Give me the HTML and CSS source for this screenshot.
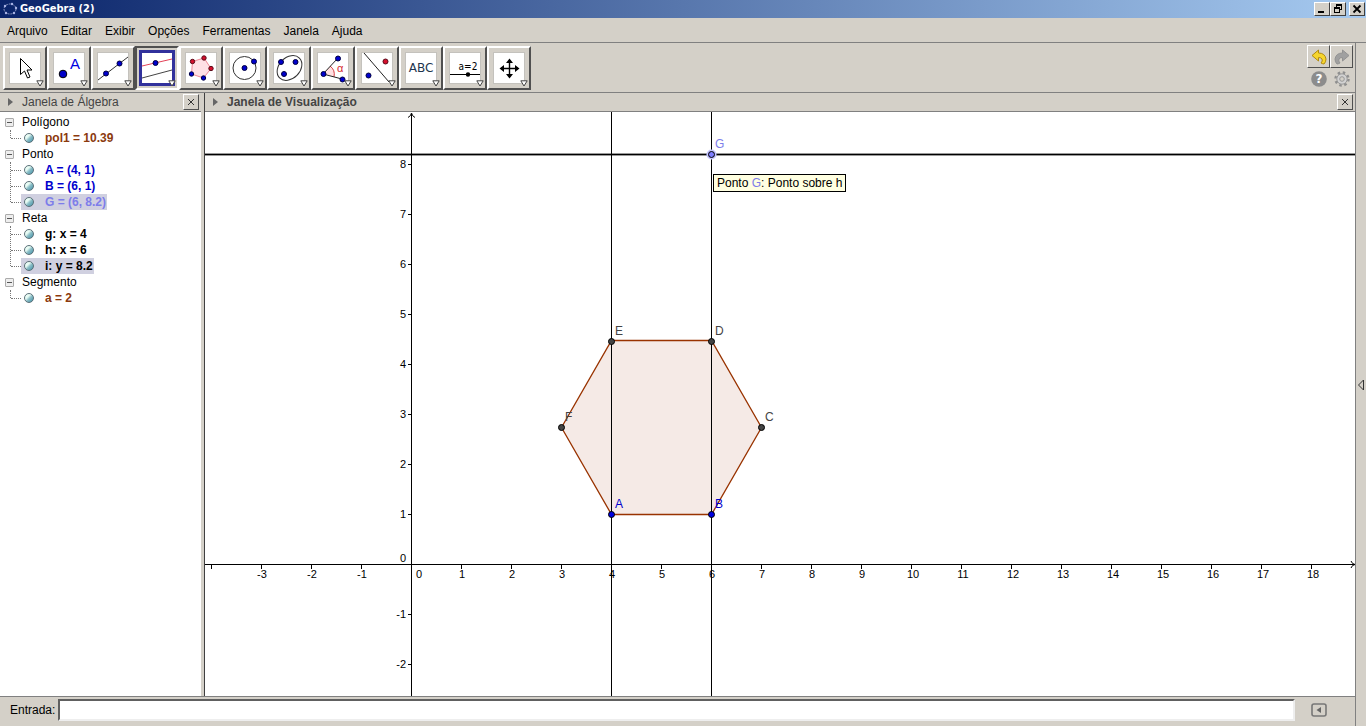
FILE: index.html
```html
<!DOCTYPE html>
<html lang="pt">
<head>
<meta charset="utf-8">
<title>GeoGebra (2)</title>
<link rel="stylesheet" href="styles.css">
</head>
<body>
<header class="titlebar">
  <svg class="logo" width="16" height="16" viewBox="0 0 16 16"><ellipse cx="8" cy="8" rx="6" ry="5" fill="none" stroke="#8f9bc4" stroke-dasharray="2 1"/><g fill="#a9b4e6"><circle cx="3" cy="5" r="1.2"/><circle cx="10" cy="3" r="1.2"/><circle cx="14" cy="7" r="1.2"/><circle cx="4" cy="12" r="1.2"/><circle cx="12" cy="12" r="1.2"/></g></svg>
  <h1 class="title">GeoGebra (2)</h1>
  <div class="winbuttons">
    <button class="winbtn" aria-label="Minimizar"><svg width="12" height="10" viewBox="0 0 12 10"><path d="M2 7h6v2H2z"/></svg></button>
    <button class="winbtn" aria-label="Restaurar"><svg width="12" height="10" viewBox="0 0 12 10" shape-rendering="crispEdges"><path d="M4 0h6v6H8V5h1V2H5v1H4zM2 3h6v6H2zM3 5v3h4V5z" fill-rule="evenodd"/></svg></button>
    <button class="winbtn winclose" aria-label="Fechar"><svg width="12" height="10" viewBox="0 0 12 10"><path d="M2.500 1.500l7 7M9.500 1.500l-7 7" stroke="#000" stroke-width="1.800"/></svg></button>
  </div>
</header>
<nav class="menubar">
  <button class="menu">Arquivo</button><button class="menu">Editar</button><button class="menu">Exibir</button><button class="menu">Opções</button><button class="menu">Ferramentas</button><button class="menu">Janela</button><button class="menu">Ajuda</button>
</nav>
<div class="workspace">
  <main class="main">
    <div class="toolbar">
      <div class="tools">
        <button class="tool" aria-label="Mover"><svg class="icon" viewBox="1 1 30 30"><path d="M11.500 6.500v16l4-3.500 3 7 2.500-1-3-7h5z" fill="#fff" stroke="#000"/></svg><svg class="drop" viewBox="0 0 8 7"><path d="M.8.8h6.400L4 6z"/></svg></button>
        <button class="tool" aria-label="Ponto"><svg class="icon" viewBox="1 1 30 30"><circle cx="10" cy="22" r="3.800" fill="#0000c8" stroke="#000"/><text class="glyph-a" x="17" y="17">A</text></svg><svg class="drop" viewBox="0 0 8 7"><path d="M.8.8h6.400L4 6z"/></svg></button>
        <button class="tool" aria-label="Reta"><svg class="icon" viewBox="1 1 30 30"><path d="M1 28L31 5" stroke="#333"/><g class="bluepoint"><circle cx="9" cy="21.500" r="2.500"/><circle cx="22.500" cy="11.500" r="2.500"/></g></svg><svg class="drop" viewBox="0 0 8 7"><path d="M.8.8h6.400L4 6z"/></svg></button>
        <button class="tool active" aria-label="Reta Paralela"><svg class="icon" viewBox="1 1 30 30"><path d="M1 14L31 7" stroke="#e24258"/><path d="M1 26L31 18" stroke="#444"/><circle class="bluepoint" cx="14.500" cy="11" r="2.500"/></svg><svg class="drop" viewBox="0 0 8 7"><path d="M.8.8h6.400L4 6z"/></svg></button>
        <button class="tool" aria-label="Polígono"><svg class="icon" viewBox="1 1 30 30"><path d="M7.500 9.500L19 6l7 10.500L18.500 26 6.500 22z" fill="#ffe0e5" stroke="#f08896"/><g class="redpoint"><circle cx="7.500" cy="9.500" r="2.200"/><circle cx="19" cy="6" r="2.200"/><circle cx="26" cy="16.500" r="2.200"/></g><g class="bluepoint"><circle cx="18.500" cy="26" r="2.200"/><circle cx="6.500" cy="22" r="2.200"/></g></svg><svg class="drop" viewBox="0 0 8 7"><path d="M.8.8h6.400L4 6z"/></svg></button>
        <button class="tool" aria-label="Círculo"><svg class="icon" viewBox="1 1 30 30"><circle cx="15.500" cy="16" r="11.500" fill="none" stroke="#333"/><g class="bluepoint"><circle cx="15.500" cy="16" r="2.500"/><circle cx="25" cy="9.500" r="2.500"/></g></svg><svg class="drop" viewBox="0 0 8 7"><path d="M.8.8h6.400L4 6z"/></svg></button>
        <button class="tool" aria-label="Elipse"><svg class="icon" viewBox="1 1 30 30"><ellipse cx="16.500" cy="16" rx="14" ry="10.500" transform="rotate(-45 16.500 16)" fill="none" stroke="#333"/><g class="bluepoint"><circle cx="8" cy="10" r="2.500"/><circle cx="22.500" cy="10" r="2.500"/><circle cx="11" cy="22" r="2.500"/></g></svg><svg class="drop" viewBox="0 0 8 7"><path d="M.8.8h6.400L4 6z"/></svg></button>
        <button class="tool" aria-label="Ângulo"><svg class="icon" viewBox="1 1 30 30"><path d="M6 22L13 14.500Q18 18 17 24.500z" fill="#ffdfe1"/><path d="M13 14Q18.500 18 17 25" fill="none" stroke="#d63a40"/><path d="M21 6L6 22l19 5" fill="none" stroke="#222"/><g class="bluepoint"><circle cx="21" cy="6.500" r="2.500"/><circle cx="6.500" cy="22" r="2.500"/><circle cx="25.500" cy="27.500" r="2.500"/></g><text class="glyph-alpha" x="20" y="20">α</text></svg><svg class="drop" viewBox="0 0 8 7"><path d="M.8.8h6.400L4 6z"/></svg></button>
        <button class="tool" aria-label="Reflexão"><svg class="icon" viewBox="1 1 30 30"><path d="M3 1L28 30" stroke="#222"/><circle class="redpoint" cx="24.500" cy="9.500" r="2.500"/><circle class="bluepoint" cx="7.500" cy="23.500" r="2.500"/></svg><svg class="drop" viewBox="0 0 8 7"><path d="M.8.8h6.400L4 6z"/></svg></button>
        <button class="tool" aria-label="Texto"><svg class="icon" viewBox="1 1 30 30"><text class="glyph-abc" x="16" y="20">ABC</text></svg><svg class="drop" viewBox="0 0 8 7"><path d="M.8.8h6.400L4 6z"/></svg></button>
        <button class="tool" aria-label="Controle Deslizante"><svg class="icon" viewBox="1 1 30 30"><text class="glyph-slider" x="19" y="18">a=2</text><path d="M1 22.500h30" stroke="#000"/><circle cx="19" cy="22.500" r="2.200"/></svg><svg class="drop" viewBox="0 0 8 7"><path d="M.8.8h6.400L4 6z"/></svg></button>
        <button class="tool" aria-label="Mover Janela"><svg class="icon" viewBox="1 1 30 30"><path d="M8 16.500h17M16.500 8v17" stroke="#000" stroke-width="1.400"/><path d="M16.500 6.500l3.500 4.500h-7zM16.500 26.500l3.500-4.500h-7zM6.500 16.500L11 13v7zM26.500 16.500L22 13v7z"/></svg><svg class="drop" viewBox="0 0 8 7"><path d="M.8.8h6.400L4 6z"/></svg></button>
      </div>
      <div class="actions">
        <button class="action raised" aria-label="Desfazer"><svg width="16" height="16" viewBox="0 0 16 16"><path d="M1 6.500L7.500 1v3Q14 4 15 10q0 3-2 5-1 0-3-1 2-2 1-4-1-1.500-3.500-1.500V12z" fill="#f6d52d" stroke="#b18a0d"/></svg></button>
        <button class="action raised" aria-label="Refazer"><svg width="16" height="16" viewBox="0 0 16 16"><path d="M15 6.500L8.500 1v3Q2 4 1 10q0 3 2 5 1 0 3-1-2-2-1-4 1-1.500 3.500-1.500V12z" fill="#a0a0a0" stroke="#929292"/></svg></button>
        <button class="action" aria-label="Ajuda"><svg width="16" height="16" viewBox="0 0 16 16"><circle cx="8" cy="8" r="7.800" fill="#8c8c8c"/><text class="glyph-help" x="8" y="12">?</text></svg></button>
        <button class="action" aria-label="Preferências"><svg width="16" height="16" viewBox="0 0 16 16"><circle cx="8" cy="8" r="6.500" fill="none" stroke="#8f8f8f" stroke-width="2.400" stroke-dasharray="2.500 2.600"/><circle cx="8" cy="8" r="5.200" fill="#d2d2d2" stroke="#989898"/><circle cx="8" cy="8" r="2.300" fill="#d4d0c8" stroke="#989898"/></svg></button>
      </div>
    </div>
    <div class="panels">
      <section class="algebra">
        <div class="panelhead"><svg width="5" height="8" viewBox="0 0 5 8"><path d="M0 0l5 4-5 4z" fill="#666"/></svg><h2 class="paneltitle">Janela de Álgebra</h2><button class="close" aria-label="Fechar Álgebra"><svg width="8" height="8" viewBox="0 0 8 8"><path d="M1 1l6 6M7 1L1 7" stroke="#333"/></svg></button></div>
        <ul class="tree">
          <li><span class="group">Polígono</span>
            <ul class="items"><li class="item brown"><span class="value">pol1 = 10.39</span></li></ul></li>
          <li><span class="group">Ponto</span>
            <ul class="items"><li class="item blue"><span class="value">A = (4, 1)</span></li><li class="item blue"><span class="value">B = (6, 1)</span></li><li class="item violet"><span class="value selected">G = (6, 8.2)</span></li></ul></li>
          <li><span class="group">Reta</span>
            <ul class="items"><li class="item"><span class="value">g: x = 4</span></li><li class="item"><span class="value">h: x = 6</span></li><li class="item"><span class="value selected">i: y = 8.2</span></li></ul></li>
          <li><span class="group">Segmento</span>
            <ul class="items"><li class="item brown"><span class="value">a = 2</span></li></ul></li>
        </ul>
      </section>
      <section class="graphics">
        <div class="panelhead"><svg width="5" height="8" viewBox="0 0 5 8"><path d="M0 0l5 4-5 4z" fill="#666"/></svg><h2 class="paneltitle strong">Janela de Visualização</h2><button class="close" aria-label="Fechar Visualização"><svg width="8" height="8" viewBox="0 0 8 8"><path d="M1 1l6 6M7 1L1 7" stroke="#333"/></svg></button></div>
        <div class="canvas">
          <svg class="plot">
            <path d="M406.500 402.500h100l50-87-50-87h-100l-50 87z" fill="#f5eae6" stroke="#993300" stroke-width="1.300"/>
            <rect x="0" y="452" width="100%" height="1"/>
            <rect x="206" y="2" width="1" height="100%"/>
            <path d="M203 5.500Q206 4 206.500 1q.5 3 3.500 4.500" fill="none" stroke="#000"/>
            <svg class="arrow" x="100%" y="452"><path d="M-4-3q1 3 4 3.500-3 .5-4 3.500" fill="none" stroke="#000"/></svg>
            <path d="M6 452h1v5h-1zM56 452h1v5h-1zM106 452h1v5h-1zM156 452h1v5h-1zM256 452h1v5h-1zM306 452h1v5h-1zM356 452h1v5h-1zM406 452h1v5h-1zM456 452h1v5h-1zM506 452h1v5h-1zM556 452h1v5h-1zM606 452h1v5h-1zM656 452h1v5h-1zM706 452h1v5h-1zM756 452h1v5h-1zM806 452h1v5h-1zM856 452h1v5h-1zM906 452h1v5h-1zM956 452h1v5h-1zM1006 452h1v5h-1zM1056 452h1v5h-1zM1106 452h1v5h-1z"/>
            <path d="M203 52h3v1h-3zM203 102h3v1h-3zM203 152h3v1h-3zM203 202h3v1h-3zM203 252h3v1h-3zM203 302h3v1h-3zM203 352h3v1h-3zM203 402h3v1h-3zM203 502h3v1h-3zM203 552h3v1h-3z"/>
            <g class="tick xtick">
              <text x="57" y="466">-3</text><text x="107" y="466">-2</text><text x="157" y="466">-1</text><text x="214" y="466">0</text><text x="257" y="466">1</text><text x="307" y="466">2</text><text x="357" y="466">3</text><text x="407" y="466">4</text><text x="457" y="466">5</text><text x="507" y="466">6</text><text x="557" y="466">7</text><text x="607" y="466">8</text><text x="657" y="466">9</text><text x="708" y="466">10</text><text x="758" y="466">11</text><text x="808" y="466">12</text><text x="858" y="466">13</text><text x="908" y="466">14</text><text x="958" y="466">15</text><text x="1008" y="466">16</text><text x="1058" y="466">17</text><text x="1108" y="466">18</text>
            </g>
            <g class="tick ytick">
              <text x="201" y="56">8</text><text x="201" y="106">7</text><text x="201" y="156">6</text><text x="201" y="206">5</text><text x="201" y="256">4</text><text x="201" y="306">3</text><text x="201" y="356">2</text><text x="201" y="406">1</text><text x="201" y="450">0</text><text x="201" y="506">-1</text><text x="201" y="556">-2</text>
            </g>
            <rect x="0" y="41" width="100%" height="3" fill="#999"/>
            <rect x="0" y="42" width="100%" height="1"/>
            <rect x="206" y="2" width="1" height="60"/>
            <rect x="406" y="0" width="1" height="100%"/>
            <rect x="506" y="0" width="1" height="100%"/>
            <circle cx="506.500" cy="42.500" r="5" fill="#c5c5ff"/>
            <g stroke="#000">
              <circle cx="506.500" cy="42.500" r="3" fill="#7d7dff"/>
              <circle cx="406.500" cy="402.500" r="3" fill="#0000e0"/><circle cx="506.500" cy="402.500" r="3" fill="#0000e0"/>
              <circle cx="556.500" cy="315.500" r="3" fill="#444"/><circle cx="506.500" cy="229.500" r="3" fill="#444"/><circle cx="406.500" cy="229.500" r="3" fill="#444"/><circle cx="356.500" cy="315.500" r="3" fill="#444"/>
            </g>
            <g class="label">
              <text class="violet" x="510" y="36">G</text><text x="410" y="223">E</text><text x="510" y="223">D</text><text x="560" y="309">C</text><text x="360" y="309">F</text><text class="blue" x="410" y="396">A</text><text class="blue" x="510" y="396">B</text>
            </g>
          </svg>
          <div class="tooltip" role="tooltip">Ponto <span class="violet">G</span>: Ponto sobre h</div>
        </div>
      </section>
    </div>
    <form class="inputbar">
      <label for="entry">Entrada:</label>
      <input class="entry" id="entry" type="text">
      <button class="help" type="button" aria-label="Ajuda de entrada"><svg width="16" height="14" viewBox="0 0 16 14"><rect x="1" y="1" width="14" height="12" rx="2" fill="none" stroke="#777" stroke-width="1.600"/><path d="M10 4v6L5.500 7z" fill="#666"/></svg></button>
    </form>
  </main>
  <aside class="side"><button class="expand" aria-label="Abrir painel"><svg width="8" height="12" viewBox="0 0 8 12"><path d="M6.500 1v10l-5-5z" fill="none" stroke="#333"/></svg></button></aside>
</div>
</body>
</html>
```
FILE: styles.css
```css
* { box-sizing: border-box; }
body { margin: 0; height: 100vh; display: flex; flex-direction: column; background: #d4d0c8; color: #000; font: 12px/16px "Liberation Sans", Arial, sans-serif; overflow: hidden; }
button { margin: 0; padding: 0; border: 0; background: transparent; font: inherit; color: inherit; }
svg { display: block; flex: none; }
ul { margin: 0; padding: 0; list-style: none; }

.titlebar { display: flex; align-items: center; height: 18px; padding: 0 1px 0 2px; background: linear-gradient(90deg, #0a246a, #a6caf0); }
.title { flex: 1; margin: 0 0 0 2px; color: #fff; font: bold 11px/18px "DejaVu Sans Condensed", "DejaVu Sans", sans-serif; }
.winbuttons { display: flex; }
.winbtn { display: grid; place-items: center; width: 16px; height: 14px; background: #d4d0c8; border: 1px solid; border-color: #fff #404040 #404040 #fff; }
.winclose { margin-left: 3px; }

.menubar { display: flex; gap: 13px; height: 25px; padding: 2px 7px 0; border-bottom: 1px solid #808080; }

.workspace { flex: 1; display: flex; min-height: 0; }
.main { flex: 1; display: flex; flex-direction: column; min-width: 0; }
.side { display: flex; align-items: center; width: 11px; border-left: 1px solid #808080; }
.expand { padding-left: 1px; }

.toolbar { display: flex; justify-content: space-between; height: 50px; padding: 2px 2px 3px 3px; border-bottom: 1px solid #808080; }
.tools { display: flex; padding-top: 1px; }
.tool { position: relative; width: 44px; height: 44px; padding: 4px; border: 2px solid; border-color: #fff #505050 #505050 #fff; }
.icon { width: 32px; height: 32px; background: #fff; border: 1px solid #c4c2bd; }
.drop { position: absolute; right: 1px; bottom: 1px; width: 8px; height: 7px; fill: #fff; stroke: #444; }
.tool.active { padding: 2px; border-color: #505050 #fff #fff #505050; }
.active .icon { width: 36px; height: 36px; border: 3px solid #31319c; }
.bluepoint { fill: #0000cd; stroke: #000040; }
.redpoint { fill: #d50f2d; stroke: #5a0a18; }
.glyph-a { font-size: 15px; fill: #0000e0; }
.glyph-alpha { font-size: 11px; fill: #d42a30; }
.glyph-abc { font: 12px "DejaVu Sans", sans-serif; text-anchor: middle; fill: #1d344d; }
.glyph-slider { font: 10px "DejaVu Sans Condensed", sans-serif; text-anchor: middle; }
.glyph-help { font: bold 12px "DejaVu Sans", sans-serif; text-anchor: middle; fill: #fff; }
.actions { display: grid; grid-template-columns: 23px 23px; grid-template-rows: 23px 22px; align-self: start; }
.action { display: grid; place-items: center; }
.raised { border: 1px solid; border-color: #fff #505050 #505050 #fff; }

.panels { flex: 1; display: flex; min-height: 0; }
.algebra { width: 201px; background: #fff; }
.graphics { flex: 1; display: flex; flex-direction: column; min-width: 0; margin-left: 3px; border-left: 1px solid #404040; }
.panelhead { display: flex; align-items: center; height: 19px; padding: 0 2px 0 8px; background: #d4d0c8; border-bottom: 1px solid #808080; }
.paneltitle { flex: 1; margin: 0; padding-left: 9px; font: 12px/18px "Liberation Sans", Arial, sans-serif; color: #444; }
.paneltitle.strong { font-weight: bold; }
.close { display: grid; place-items: center; width: 16px; height: 16px; border: 1px solid; border-color: #fff #505050 #505050 #fff; }

.tree { padding-top: 2px; }
.group { position: relative; display: block; padding-left: 22px; }
.group::before { content: ""; position: absolute; left: 5px; top: 4px; width: 9px; height: 9px; border: 1px solid #aaa; border-radius: 1px; background: linear-gradient(#555, #555) center / 5px 1px no-repeat, #eee; }
.items { position: relative; }
.items::before { content: ""; position: absolute; left: 10px; top: 0; bottom: 8px; border-left: 1px dotted #777; }
.item { height: 16px; padding-left: 21px; position: relative; font-weight: bold; }
.item::before { content: ""; position: absolute; left: 11px; top: 8px; width: 10px; border-top: 1px dotted #777; }
.value { position: relative; display: inline-block; padding: 0 1px 0 24px; }
.value::before { content: ""; position: absolute; left: 3px; top: 3px; width: 10px; height: 10px; border: 1px solid #5b7078; border-radius: 50%; background: linear-gradient(135deg, #e8fcf4 35%, #8ec0c8 55%, #3f8fa6); }
.selected { background: #d0d0e0; }
.brown { color: #8b3a0e; }
.blue { color: #0000cd; fill: #0000cd; }
.violet { color: #7d7dea; fill: #7d7dea; }
.group::before, .value::before { box-sizing: border-box; }

.canvas { position: relative; flex: 1; min-height: 0; background: #fff; }
.plot { width: 100%; height: 100%; overflow: hidden; }
.arrow { overflow: visible; }
.tick { font-size: 11px; }
.xtick { text-anchor: middle; }
.ytick { text-anchor: end; }
.label { font-size: 12px; fill: #444; }
.tooltip { position: absolute; left: 508px; top: 62px; padding: 0 3px; border: 1px solid #000; background: #ffffe1; white-space: nowrap; }

.inputbar { display: flex; align-items: center; height: 30px; padding: 0 0 3px 10px; border-top: 1px solid #808080; }
.entry { flex: 1; min-width: 0; height: 22px; margin: 0 16px 0 3px; border: 2px solid; border-color: #606060 #eee #eee #606060; background: #fff; font: inherit; }
.help { margin-right: 28px; }
```
